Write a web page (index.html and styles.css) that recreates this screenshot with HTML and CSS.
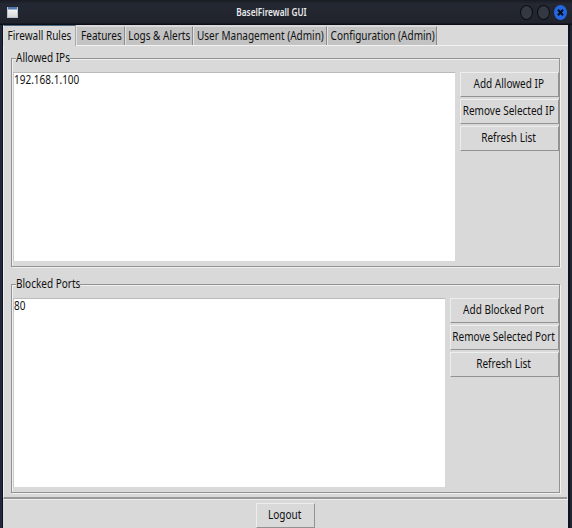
FILE: index.html
```html
<!DOCTYPE html>
<html lang="en">
<head>
<meta charset="utf-8">
<title>BaselFirewall GUI</title>
<link rel="stylesheet" href="styles.css">
</head>
<body>
<div class="window">
  <header class="titlebar">
    <i class="app-icon"></i>
    <h1><span>BaselFirewall GUI</span></h1>
    <div class="controls">
      <i></i><i></i>
      <i class="close"><svg viewBox="0 0 13 15"><path d="M4 4.8l5 5.4M9 4.8L4 10.2"/></svg></i>
    </div>
  </header>
  <main class="content">
    <nav class="tabs">
      <div class="tab active"><span>Firewall Rules</span></div>
      <div class="tab features"><span>Features</span></div>
      <div class="tab logs"><span>Logs &amp; Alerts</span></div>
      <div class="tab users"><span>User Management (Admin)</span></div>
      <div class="tab config"><span>Configuration (Admin)</span></div>
    </nav>
    <div class="page">
      <section class="group ips">
        <h2><span>Allowed IPs</span></h2>
        <div class="list"><span>192.168.1.100</span></div>
        <div class="actions">
          <button><span>Add Allowed IP</span></button>
          <button><span>Remove Selected IP</span></button>
          <button><span>Refresh List</span></button>
        </div>
      </section>
      <section class="group ports">
        <h2><span>Blocked Ports</span></h2>
        <div class="list"><span>80</span></div>
        <div class="actions">
          <button><span>Add Blocked Port</span></button>
          <button><span>Remove Selected Port</span></button>
          <button><span>Refresh List</span></button>
        </div>
      </section>
    </div>
    <footer class="footer"><button><span>Logout</span></button></footer>
  </main>
</div>
</body>
</html>
```
FILE: styles.css
```css
* { box-sizing: border-box; }
body { margin: 0; background: #171a24; }
.window {
  width: 572px; height: 528px; padding: 0 4px 0 3px; overflow: hidden;
  background: linear-gradient(90deg, #20283a 0 2px, #10121c 2px 570px, #1e2432 570px);
  font: 13px/18px "Noto Sans", sans-serif; color: #111;
}
span { display: inline-block; white-space: nowrap; transform: scaleX(.77); }

.titlebar {
  position: relative; display: flex; align-items: center; justify-content: space-between;
  height: 25px; margin: 0 -4px 0 -3px; padding: 0 5px 0 7px;
  background: linear-gradient(#191b23, #242832 4px, #20232c 23px, #0d0f18 24px);
}
.app-icon { width: 11px; height: 11px; background: linear-gradient(#5179ad 0 2px, #f4f4f4 3px, #d8d8d6); border: 1px solid #b9c3cf; border-top: 0; }
h1 { position: absolute; left: 0; right: 30px; top: 4px; margin: 0; text-align: center; font-size: 10px; line-height: 17px; font-weight: 600; color: #e9eaec; }
h1 span { transform: scaleX(.83); }
.controls { display: flex; gap: 4px; }
.controls i { width: 13px; height: 15px; border: 1px solid #0b0d13; border-radius: 50%; background: #343842; }
.controls .close { border: 0; background: #2367e2; }
.close svg { display: block; width: 13px; height: 15px; fill: none; stroke: #080c18; stroke-width: 2; }

.content { height: 503px; background: #d9d9d9; }
.tabs { display: flex; align-items: flex-end; height: 21px; border-bottom: 1px solid #f2f2f2; }
.tab {
  display: flex; align-items: center; justify-content: center; height: 19px; padding: 0 0 2px 1px;
  background: #c3c3c3; border-top: 1px solid #d8d8d8; border-left: 1px solid #e1e1e1; border-right: 1px solid #8c8c8c;
}
.tab.active { width: 73px; height: 21px; margin-bottom: -1px; padding: 0 1px 3px 0; background: #d9d9d9; border-top: 1px solid #4b6983; border-right-color: #aaa; }
.features { width: 49px; }
.logs { width: 68px; }
.users { width: 134px; }
.config { width: 110px; }

.page { height: 453px; margin-right: 1px; padding: 12px 7px 0; border-left: 1px solid #efefef; border-bottom: 2px solid #999; }
.group {
  position: relative; display: flex; height: 209px; gap: 5px;
  padding: 13px 0 5px 1px; border: 1px solid #929292;
  box-shadow: inset 1px 1px #f0f0f0, 1px 1px #f0f0f0;
}
.ports { margin-top: 17px; }
h2 { position: absolute; left: 4px; top: -11px; margin: 0; height: 18px; background: #d9d9d9; font: inherit; }
h2 span { transform-origin: left; }
.ips h2 { width: 54px; }
.ports h2 { width: 64px; }
.list { flex: 1; background: #fff; border-top: 1px solid #bbb; border-left: 1px solid #c9c9c9; line-height: 13px; }
.list span { transform-origin: left; margin-left: -.5px; }
.actions { display: flex; flex-direction: column; gap: 2px; width: 99px; }
.ports .actions { width: 109px; }
button {
  display: flex; align-items: center; justify-content: center;
  height: 25px; padding: 0 1px 4px 0; font: inherit; color: inherit; background: #d9d9d9;
  border: solid; border-width: 1px; border-color: #eee #929292 #929292 #eee;
}
.footer { display: flex; justify-content: center; height: 29px; padding-top: 3px; border-top: 1px solid #eee; }
.footer button { width: 59px; }
```
